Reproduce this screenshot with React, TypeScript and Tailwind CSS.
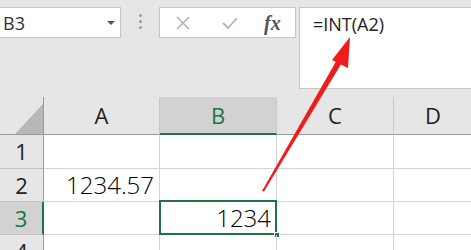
import React from "react";

const hdrFont = { fontFamily: '"Open Sans", "Liberation Sans", sans-serif' };

export default function App() {
  return (
    <div className="relative w-[471px] h-[250px] overflow-hidden bg-[#e6e6e6]" style={hdrFont}>
      {/* Top bar */}
      <div className="flex h-[97px] pt-[7px]">
        <div className="relative w-[121px] h-[31px] bg-white border border-l-0 border-[#c6c6c6] flex items-center pl-[3px]">
          <span className="text-[18px] text-[#333] leading-none">B3</span>
          <svg className="absolute left-[107px] top-[13px]" width="8" height="5" viewBox="0 0 8 5">
            <path d="M0 0 L8 0 L4 4 Z" fill="#555" />
          </svg>
        </div>
        <div className="w-[38px] flex flex-col items-center pt-[7px] gap-[3px]">
          <div className="w-[3px] h-[3px] rounded-full bg-[#9a9a9a]" />
          <div className="w-[3px] h-[3px] rounded-full bg-[#9a9a9a]" />
          <div className="w-[3px] h-[3px] rounded-full bg-[#9a9a9a]" />
        </div>
        <div className="w-[137px] h-[31px] bg-white border border-[#c6c6c6] flex items-center">
          <svg className="ml-[16px]" width="14" height="14" viewBox="0 0 14 14">
            <path d="M1 1 L13 13 M13 1 L1 13" stroke="#b4b4b4" strokeWidth="1.6" />
          </svg>
          <svg className="ml-[32px]" width="16" height="12" viewBox="0 0 16 12">
            <path d="M1 6 L6 11 L15 1" stroke="#b4b4b4" strokeWidth="1.8" fill="none" />
          </svg>
          <span
            className="ml-[26px] text-[20px] italic font-bold text-[#555] leading-none"
            style={{ fontFamily: '"Liberation Serif", serif' }}
          >
            fx
          </span>
        </div>
        <div className="ml-[3px] flex-1 h-[82px] bg-white border border-r-0 border-[#c6c6c6] pl-[13px] pt-[5px]">
          <span className="text-[18px] text-[#222] leading-none">=INT(A2)</span>
        </div>
      </div>

      {/* Grid */}
      <div className="bg-white">
        {/* Header row */}
        <div className="flex h-[38px] bg-[#e6e6e6]">
          <div className="relative w-[44px] border-r border-b border-[#9b9b9b]">
            <svg className="absolute left-[15px] top-[7px]" width="28" height="30" viewBox="0 0 28 30">
              <path d="M28 0 L28 30 L0 30 Z" fill="#b8b8b8" />
            </svg>
          </div>
          <div className="w-[116px] border-r border-b border-r-[#c8c8c8] border-b-[#9b9b9b] flex items-center justify-center text-[22px] text-[#222]">
            A
          </div>
          <div className="w-[117px] border-r border-b-2 border-r-[#c8c8c8] border-b-[#217346] bg-[#d2d2d2] flex items-center justify-center text-[22px] text-[#217346] pt-[1px]">
            B
          </div>
          <div className="w-[117px] border-r border-b border-r-[#c8c8c8] border-b-[#9b9b9b] flex items-center justify-center text-[22px] text-[#222]">
            C
          </div>
          <div className="flex-1 border-b border-[#9b9b9b] flex items-center justify-center text-[22px] text-[#222] pl-[1px]">
            D
          </div>
        </div>

        {[
          { n: "1", a: "", b: "", h: "h-[34px]" },
          { n: "2", a: "1234.57", b: "", h: "h-[33px]" },
          { n: "3", a: "", b: "1234", h: "h-[33px]", sel: true },
          { n: "4", a: "", b: "", h: "h-[33px]" },
        ].map((r) => (
          <div key={r.n} className={`flex ${r.h}`}>
            <div
              className={
                r.sel
                  ? "w-[44px] bg-[#d2d2d2] border-r-2 border-r-[#217346] border-b border-b-[#c0c0c0] flex items-center justify-center text-[22px] text-[#217346]"
                  : "w-[44px] bg-[#e6e6e6] border-r border-r-[#9b9b9b] border-b border-b-[#c0c0c0] flex items-center justify-center text-[22px] text-[#222]"
              }
            >
              {r.n}
            </div>
            <div className="w-[116px] border-r border-b border-[#d4d4d4] flex items-center justify-end pr-[5px] text-[24px] font-light text-[#000]">
              {r.a}
            </div>
            <div className="relative w-[117px] border-r border-b border-[#d4d4d4] flex items-center justify-end pr-[5px] text-[24px] font-light text-[#000]">
              {r.b}
              {r.sel && (
                <div className="absolute left-[-1px] top-[-2px] right-[-1px] bottom-[-1px] border-2 border-[#217346]">
                  <div className="absolute right-[-5px] bottom-[-5px] w-[6px] h-[6px] bg-[#217346] border border-white" />
                </div>
              )}
            </div>
            <div className="w-[117px] border-r border-b border-[#d4d4d4]" />
            <div className="flex-1 border-b border-[#d4d4d4]" />
          </div>
        ))}
      </div>

      {/* Red arrow */}
      <svg className="absolute left-0 top-0 pointer-events-none" width="471" height="250" viewBox="0 0 471 250">
        <path d="M262 191 L264 191.5 L343 61 L338 58 Z" fill="#f01c1c" />
        <path d="M350 37 L332 60 L348 68 Z" fill="#f01c1c" />
      </svg>
    </div>
  );
}
